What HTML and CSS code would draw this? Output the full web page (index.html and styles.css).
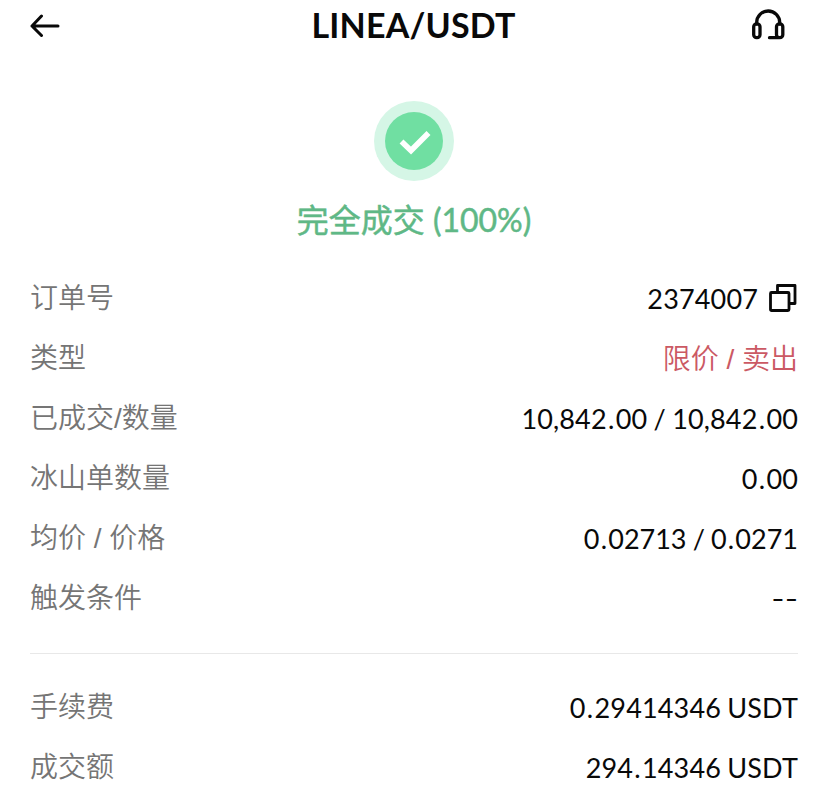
FILE: index.html
```html
<!DOCTYPE html>
<html lang="zh-CN">
<head>
<meta charset="utf-8">
<title>LINEA/USDT</title>
<link rel="stylesheet" href="styles.css">
</head>
<body>
<header class="bar">
  <svg class="back" viewBox="0 0 30 24" width="30" height="24"><path d="M11.500 2 2 12l9.500 9.500M2 12h26"/></svg>
  <h1>LINEA/USDT</h1>
  <svg class="support" viewBox="0 0 34 32" width="34" height="32"><path d="M5.700 15v-1.500a11.500 11.500 0 0 1 23 0V15M27 28.700h-8.500"/><rect x="2.700" y="14.800" width="6.300" height="13.900" rx="3"/><rect x="25.500" y="14.800" width="6.300" height="13.900" rx="3"/></svg>
</header>
<section class="status">
  <svg width="80" height="80" viewBox="0 0 80 80"><circle class="halo" cx="40" cy="40" r="40"/><circle class="disc" cx="40" cy="40" r="29"/><path class="tick" d="m27.500 40.500 9.500 9 17.500-17.500"/></svg>
  <p>完全成交 (100%)</p>
</section>
<main>
  <dl class="rows">
    <div><dt>订单号</dt><dd>2374007<svg class="copy" width="28" height="28" viewBox="0 0 28 28"><path d="M8.500 7V1.500h17.500v18H21"/><rect x="1.500" y="8.500" width="18.500" height="18" rx="1"/></svg></dd></div>
    <div><dt>类型</dt><dd class="sell">限价 / 卖出</dd></div>
    <div><dt>已成交/数量</dt><dd><p>10,842<span class="point">.</span>00 / 10,842<span class="point">.</span>00</p></dd></div>
    <div><dt>冰山单数量</dt><dd><p>0<span class="point">.</span>00</p></dd></div>
    <div><dt>均价 / 价格</dt><dd class="price"><p>0<span class="point">.</span>02713 / 0<span class="point">.</span>0271</p></dd></div>
    <div><dt>触发条件</dt><dd class="none">--</dd></div>
  </dl>
  <dl class="rows fees">
    <div><dt>手续费</dt><dd><p>0<span class="point">.</span>29414346 USDT</p></dd></div>
    <div><dt>成交额</dt><dd><p>294<span class="point">.</span>14346 USDT</p></dd></div>
  </dl>
</main>
</body>
</html>
```
FILE: styles.css
```css
* {
  box-sizing: border-box;
  margin: 0;
  padding: 0;
}

body {
  background: #fff;
  color: #090909;
  font-family: Lato, "Noto Sans CJK SC", sans-serif;
  font-size: 27px;
  overflow: hidden;
}

svg {
  display: block;
  fill: none;
  stroke: #090909;
  stroke-width: 3;
  stroke-linecap: round;
  stroke-linejoin: round;
}

.bar {
  height: 52px;
  padding: 0 43px 0 30px;
  display: grid;
  grid-template-columns: 87px 1fr 75px;
  align-items: center;
}

.support {
  justify-self: end;
  margin-top: -2px;
  stroke-width: 3.3;
}

h1 {
  padding-bottom: 4px;
  font-size: 34px;
  font-weight: 700;
  letter-spacing: 0.2px;
  text-align: center;
}

.status {
  height: 216px;
  padding-top: 49px;
  display: flex;
  flex-direction: column;
  align-items: center;
}

.status p {
  margin-top: 19px;
  color: #5fb886;
  font-size: 32px;
  line-height: 40px;
  -webkit-text-stroke: 0.5px #5fb886;
}

.halo {
  fill: #d5f6e6;
  stroke: none;
}

.disc {
  fill: #70dfa2;
  stroke: none;
}

.tick {
  stroke: #fff;
  stroke-width: 5.6;
  stroke-linecap: butt;
  stroke-linejoin: miter;
}

.rows {
  margin: 0 30px;
}

.rows div {
  height: 60px;
  display: flex;
  justify-content: space-between;
  align-items: center;
}

dt {
  color: #757575;
  font-family: "Liberation Sans", "Noto Sans CJK SC", sans-serif;
  font-size: 28px;
  font-weight: 350;
  line-height: 36px;
  padding-top: 1px;
}

dd {
  display: flex;
  align-items: center;
  gap: 11px;
  letter-spacing: 0.15px;
  word-spacing: -0.8px;
}

.point {
  margin: 0 1.2px;
}

.copy {
  stroke-width: 2.8;
  margin-right: 1px;
}

.sell {
  color: #cb5964;
  font-family: "Liberation Sans", "Noto Sans CJK SC", sans-serif;
  font-size: 28px;
  font-weight: 350;
  line-height: 36px;
  letter-spacing: 0;
  word-spacing: 0;
  padding-top: 3px;
}

.price {
  letter-spacing: 0;
}

.none {
  padding-bottom: 1px;
  transform: scaleX(1.33);
  transform-origin: right;
}

.fees {
  border-top: 1px solid #e8e8e8;
  margin-top: 25px;
  padding-top: 23px;
}
```
